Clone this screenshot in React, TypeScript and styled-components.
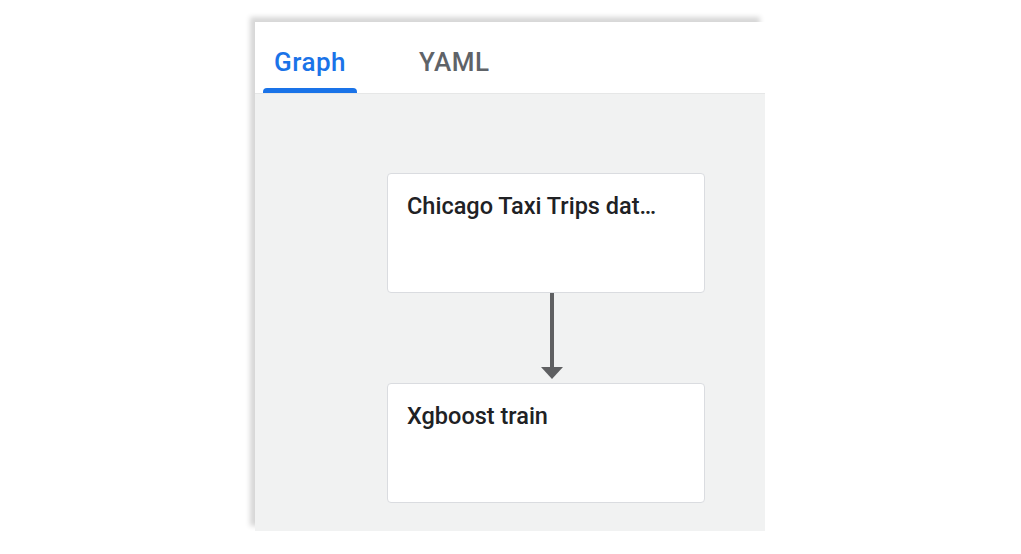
import React from 'react'
import styled, { createGlobalStyle } from 'styled-components'

const GlobalStyle = createGlobalStyle`
  html, body {
    margin: 0;
    background: #ffffff;
    font-family: Roboto, "Liberation Sans", Arial, sans-serif;
  }
`

const Page = styled.main`
  width: 1021px;
  height: 554px;
  padding: 22px 0 0 255px;
  box-sizing: border-box;
  overflow: hidden;
`

const Panel = styled.section`
  width: 510px;
  height: 509px;
  display: flex;
  flex-direction: column;
  background: #ffffff;
  box-shadow: -5px -5px 5px rgba(0, 0, 0, 0.16);
`

const TabBar = styled.nav`
  height: 71px;
  display: flex;
  align-items: stretch;
  padding-left: 8px;
  gap: 51px;
  flex-shrink: 0;
`

const Tab = styled.div<{ $active?: boolean }>`
  position: relative;
  display: flex;
  align-items: center;
  justify-content: center;
  padding: 8px 11px 0;
  font-size: 26px;
  font-weight: 500;
  letter-spacing: 0.5px;
  color: ${p => (p.$active ? '#1a73e8' : '#5f6368')};

  &::after {
    content: '';
    display: ${p => (p.$active ? 'block' : 'none')};
    position: absolute;
    left: 0;
    right: 0;
    bottom: 0;
    height: 5px;
    border-radius: 4px 4px 0 0;
    background: #1a73e8;
  }
`

const Canvas = styled.div`
  flex: 1;
  background: #f1f2f2;
  border-top: 1px solid #e6e7e7;
  padding: 79px 0 0 132px;
  display: flex;
  flex-direction: column;
  align-items: flex-start;
`

const Node = styled.div`
  width: 318px;
  height: 120px;
  box-sizing: border-box;
  background: #ffffff;
  border: 1px solid #dadce0;
  border-radius: 4px;
  padding: 18px 19px;
  font-size: 23.5px;
  font-weight: 500;
  line-height: 28px;
  color: #202124;
`

const Edge = styled.svg`
  display: block;
  margin-left: 154px;
`

const Arrow = () => (
  <Edge width="22" height="90" viewBox="0 0 22 90">
    <rect x="9" y="0" width="4" height="76" fill="#5f6062" />
    <polygon points="0,74 22,74 11,86" fill="#5f6062" />
  </Edge>
)

const App = () => (
  <Page>
    <GlobalStyle />
    <Panel>
      <TabBar>
        <Tab $active>Graph</Tab>
        <Tab>YAML</Tab>
      </TabBar>
      <Canvas>
        <Node>Chicago Taxi Trips dat…</Node>
        <Arrow />
        <Node>Xgboost train</Node>
      </Canvas>
    </Panel>
  </Page>
)

export default App
